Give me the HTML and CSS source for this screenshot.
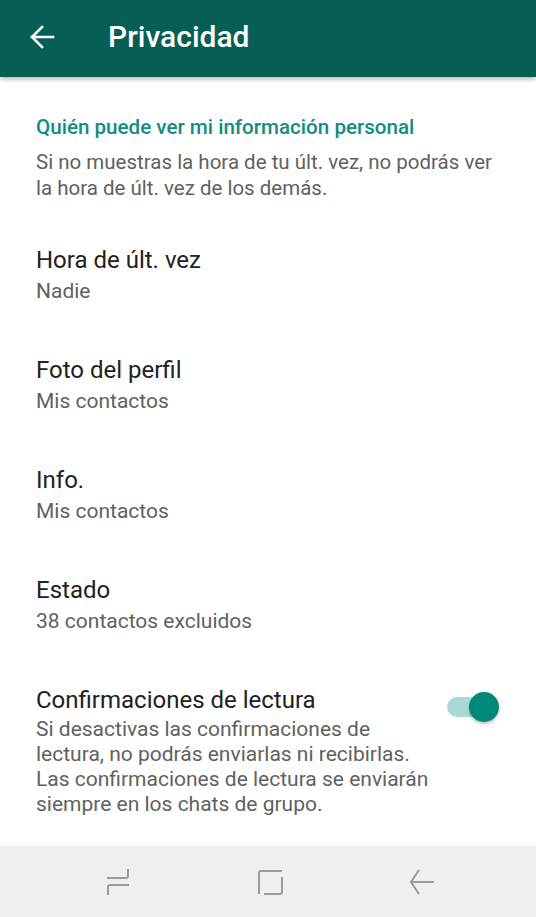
FILE: index.html
```html
<!DOCTYPE html>
<html lang="es">
  <head>
    <meta charset="UTF-8" />
    <meta name="viewport" content="width=device-width, initial-scale=1.0" />
    <title>Privacidad</title>
    <link rel="stylesheet" href="styles.css">
  </head>
  <body>
    <header class="app-bar">
      <button class="back-button" aria-label="Atrás">
        <svg width="26" height="26" viewBox="0 0 26 26">
          <path d="M24 13H3M13 3L3 13l10 10" fill="none" stroke="#fff" stroke-width="2.6" stroke-linecap="square" />
        </svg>
      </button>
      <h1>Privacidad</h1>
    </header>

    <main class="content">
      <section class="group">
        <h2 class="group-title">Quién puede ver mi información personal</h2>
        <p class="group-note">
          Si no muestras la hora de tu últ. vez, no podrás ver la hora de últ. vez de los demás.
        </p>
      </section>

      <div class="item">
        <div class="item-title">Hora de últ. vez</div>
        <div class="item-sub">Nadie</div>
      </div>
      <div class="item">
        <div class="item-title">Foto del perfil</div>
        <div class="item-sub">Mis contactos</div>
      </div>
      <div class="item">
        <div class="item-title">Info.</div>
        <div class="item-sub">Mis contactos</div>
      </div>
      <div class="item">
        <div class="item-title">Estado</div>
        <div class="item-sub">38 contactos excluidos</div>
      </div>
      <div class="item item-switch">
        <div class="item-text">
          <div class="item-title">Confirmaciones de lectura</div>
          <div class="item-sub long">
            Si desactivas las confirmaciones de lectura, no podrás enviarlas ni recibirlas.
            Las confirmaciones de lectura se enviarán siempre en los chats de grupo.
          </div>
        </div>
        <div class="switch on">
          <div class="switch-track"></div>
          <div class="switch-thumb"></div>
        </div>
      </div>
    </main>

    <nav class="nav-bar">
      <svg class="nav-icon" width="28" height="28" viewBox="0 0 28 28">
        <path d="M3 10H22Q24 10 24 8V1M25 17H6Q4 17 4 19V27" fill="none" stroke="#9a9a9a" stroke-width="2" />
      </svg>
      <svg class="nav-icon" width="28" height="28" viewBox="0 0 28 28">
        <path d="M26 3H5Q3 3 3 5V26M8 26H24Q26 26 26 24V9" fill="none" stroke="#9a9a9a" stroke-width="2" />
      </svg>
      <svg class="nav-icon" width="28" height="28" viewBox="0 0 28 28">
        <path d="M26 14H3.5M11 2L3 14l8 12" fill="none" stroke="#9a9a9a" stroke-width="2" />
      </svg>
    </nav>
  </body>
</html>
```

FILE: styles.css
```css
body {
  margin: 0;
  font-family: Roboto, "Noto Sans", sans-serif;
  background-color: #fff;
  width: 536px;
  height: 917px;
  display: flex;
  flex-direction: column;
  overflow: hidden;
}
.app-bar {
  height: 77px;
  flex-shrink: 0;
  background-color: #075e54;
  display: flex;
  align-items: center;
  padding-left: 29px;
  box-shadow: 0 2px 5px rgba(0, 0, 0, 0.3);
  position: relative;
  z-index: 1;
}
.back-button {
  background: none;
  border: none;
  padding: 0;
  width: 26px;
  height: 26px;
  margin-top: -4px;
}
.back-button svg {
  display: block;
}
.app-bar h1 {
  margin: -4px 0 0 53px;
  color: #fff;
  font-size: 30px;
  font-weight: 500;
  line-height: 36px;
}
.content {
  flex: 1;
  padding: 0 36px;
}
.group {
  padding-top: 37px;
}
.group-title {
  margin: 0;
  font-size: 20.6px;
  font-weight: 500;
  line-height: 26px;
  color: #128c7e;
}
.group-note {
  margin: 9px 0 0;
  font-size: 20.5px;
  line-height: 26px;
  color: #616161;
}
.item {
  padding: 22px 0 29px;
}
.item:first-of-type {
  padding-top: 44px;
}
.item-title {
  font-size: 24px;
  line-height: 30px;
  color: #212121;
}
.item-sub {
  margin-top: 3px;
  font-size: 21px;
  line-height: 26px;
  color: #616161;
}
.item-sub.long {
  margin-top: 2px;
  line-height: 25px;
  width: 395px;
}
.item-switch {
  display: flex;
  justify-content: space-between;
  align-items: flex-start;
}
.switch {
  position: relative;
  width: 52px;
  height: 30px;
  margin-top: 7px;
  margin-right: 1px;
  flex-shrink: 0;
}
.switch-track {
  position: absolute;
  left: 0;
  top: 5px;
  width: 44px;
  height: 20px;
  border-radius: 10px;
  background-color: #a8dad3;
}
.switch-thumb {
  position: absolute;
  right: 0;
  top: 0;
  width: 30px;
  height: 30px;
  border-radius: 50%;
  background-color: #00897b;
  box-shadow: 0 2px 3px rgba(0, 0, 0, 0.25);
}
.nav-bar {
  height: 72px;
  flex-shrink: 0;
  background-color: #efefef;
  display: flex;
  align-items: center;
  justify-content: center;
  gap: 124px;
  padding-left: 4px;
}
.nav-icon {
  display: block;
}
```
